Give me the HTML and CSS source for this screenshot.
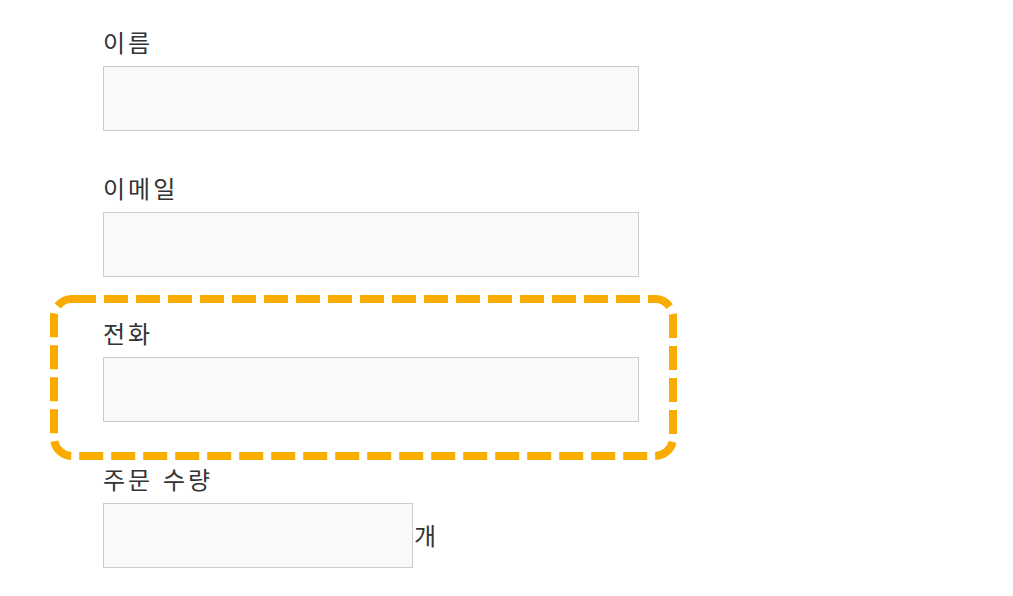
FILE: index.html
```html
<!DOCTYPE html>
<html lang="ko">
<head>
<meta charset="utf-8">
<link rel="stylesheet" href="styles.css">
</head>
<body>
<form class="form">
  <div class="field">
    <label class="label" for="name">이름</label>
    <input class="input" id="name" type="text">
  </div>
  <div class="field">
    <label class="label" for="email">이메일</label>
    <input class="input" id="email" type="email">
  </div>
  <div class="field highlight">
    <label class="label" for="tel">전화</label>
    <input class="input" id="tel" type="tel">
    <svg class="highlight-frame" width="627" height="165" viewBox="0 0 627 165" aria-hidden="true">
      <rect x="4" y="4" width="619" height="157" rx="18" ry="18" fill="none" stroke="#f9ab00" stroke-width="8" stroke-dasharray="24 8"></rect>
    </svg>
  </div>
  <div class="field">
    <label class="label" for="qty">주문 수량</label>
    <div class="qty-row"><input class="input input-short" id="qty" type="text"><span class="unit">개</span></div>
  </div>
</form>
</body>
</html>
```
FILE: styles.css
```css
html, body {
  margin: 0;
  padding: 0;
  background: #ffffff;
}
body {
  font-family: "Noto Sans CJK KR", "Noto Sans", sans-serif;
  color: #333333;
}
.form {
  padding: 24px 0 0 103px;
}
.field {
  width: 536px;
  margin-bottom: 38.67px;
}
.label {
  display: block;
  font-size: 24px;
  line-height: 36px;
  letter-spacing: 3px;
  margin-bottom: 6px;
  color: #333333;
}
.input {
  display: block;
  box-sizing: border-box;
  width: 536px;
  height: 65px;
  margin: 0;
  padding: 0 10px;
  border: 1px solid #cccccc;
  border-radius: 0;
  background: #f9f9f9;
  font-family: inherit;
  font-size: 24px;
  outline: none;
}
.qty-row {
  display: flex;
  align-items: center;
}
.input-short {
  width: 310px;
}
.unit {
  font-size: 24px;
  line-height: 36px;
  margin-left: 1px;
  color: #333333;
}
.highlight {
  position: relative;
}
.highlight-frame {
  position: absolute;
  top: -20px;
  left: -53px;
  pointer-events: none;
}
```
